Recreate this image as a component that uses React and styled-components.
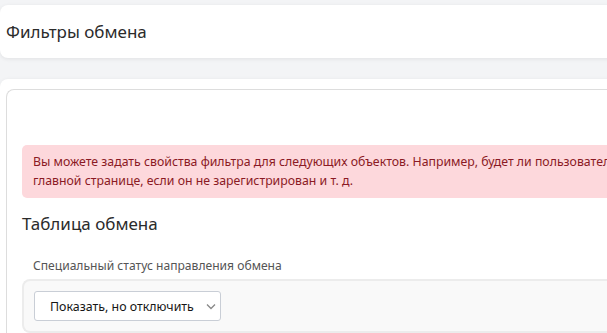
import React from 'react';
import styled, { createGlobalStyle } from 'styled-components';

const GlobalStyle = createGlobalStyle`
  html, body {
    margin: 0;
    padding: 0;
    background: #f3f4f6;
    font-family: "Noto Sans", "Open Sans", sans-serif;
    overflow: hidden;
  }
`;

const Page = styled.div`
  width: 640px;
  padding-top: 5px;
  display: flex;
  flex-direction: column;
  gap: 21px;
`;

const Card = styled.div`
  background: #fff;
  border-radius: 8px;
  box-shadow: 0 1px 4px rgba(0, 0, 0, 0.08);
`;

const HeaderCard = styled(Card)`
  height: 53px;
  display: flex;
  align-items: center;
  padding-left: 6px;
`;

const PageTitle = styled.h1`
  margin: 0;
  font-size: 17px;
  font-weight: 400;
  color: #2b2b2b;
`;

const BodyCard = styled(Card)`
  padding: 10px 0 0 6px;
  height: 300px;
`;

const Panel = styled.div`
  border: 1px solid #dddddd;
  border-right: none;
  border-radius: 8px 0 0 8px;
  padding: 55px 0 20px 15px;
  height: 100%;
  overflow: hidden;
`;

const Alert = styled.div`
  background: #fdd8dc;
  color: #8b1a24;
  border-radius: 5px 0 0 5px;
  padding: 7px 0 8px 11px;
  font-size: 12.3px;
  line-height: 19px;
  white-space: nowrap;
  overflow: hidden;
`;

const SectionTitle = styled.h2`
  margin: 14px 0 0;
  font-size: 17px;
  font-weight: 400;
  color: #2b2b2b;
`;

const FieldLabel = styled.div`
  margin: 22px 0 0 11px;
  font-size: 12.1px;
  color: #555;
`;

const FieldBox = styled.div`
  margin-top: 5px;
  background: #f9f9f9;
  border: 2px solid #ececec;
  border-right: none;
  border-radius: 8px 0 0 8px;
  padding: 10px 0 10px 10px;
`;

const SelectWrap = styled.div`
  position: relative;
  width: 187px;
`;

const Select = styled.select`
  appearance: none;
  width: 187px;
  height: 30px;
  background: #fff;
  border: 1px solid #c9ced6;
  border-radius: 3px;
  padding: 0 10px 0 15px;
  font-family: inherit;
  font-size: 12.4px;
  color: #161616;
`;

const Chevron = styled.svg`
  position: absolute;
  right: 5px;
  top: 12px;
  pointer-events: none;
`;

export default function App() {
  return (
    <>
      <GlobalStyle />
      <Page>
        <HeaderCard>
          <PageTitle>Фильтры обмена</PageTitle>
        </HeaderCard>
        <BodyCard>
          <Panel>
            <Alert>
              Вы можете задать свойства фильтра для следующих объектов. Например, будет ли пользователь видеть направление на
              <br />
              главной странице, если он не зарегистрирован и т. д.
            </Alert>
            <SectionTitle>Таблица обмена</SectionTitle>
            <FieldLabel>Специальный статус направления обмена</FieldLabel>
            <FieldBox>
              <SelectWrap>
                <Select defaultValue="show">
                  <option value="show">Показать, но отключить</option>
                  <option value="hide">Скрыть</option>
                </Select>
                <Chevron width="10" height="7" viewBox="0 0 10 7">
                  <path d="M1 1.5 L5 5.5 L9 1.5" fill="none" stroke="#888" strokeWidth="1.3" />
                </Chevron>
              </SelectWrap>
            </FieldBox>
          </Panel>
        </BodyCard>
      </Page>
    </>
  );
}
